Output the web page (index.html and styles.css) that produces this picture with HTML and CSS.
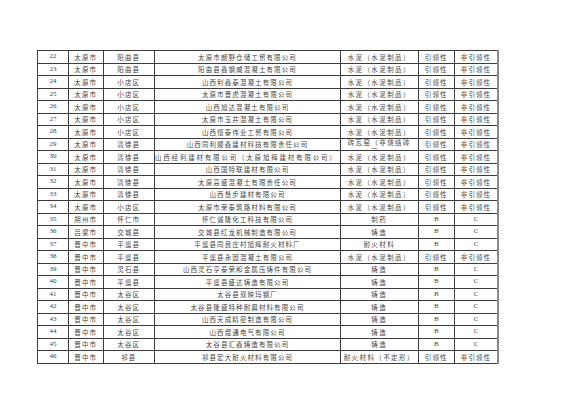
FILE: index.html
```html
<!DOCTYPE html>
<html lang="zh">
<head>
<meta charset="utf-8">
<title>名单</title>
<link rel="stylesheet" href="styles.css">
</head>
<body>
<table class="list">
<colgroup>
<col class="c-no"><col class="c-city"><col class="c-county"><col class="c-name"><col class="c-ind"><col class="c-a"><col class="c-b">
</colgroup>
<tbody>
<tr><td class="num">22</td><td>太原市</td><td>阳曲县</td><td>太原市朗野仓储工贸有限公司</td><td class="ind">水泥（水泥制品）</td><td>引领性</td><td class="last">非引领性</td></tr>
<tr><td class="num">23</td><td>太原市</td><td>阳曲县</td><td>阳曲县鑫钢威混凝土有限公司</td><td class="ind">水泥（水泥制品）</td><td>引领性</td><td class="last">非引领性</td></tr>
<tr><td class="num">24</td><td>太原市</td><td>小店区</td><td>山西利鑫泰混凝土有限公司</td><td class="ind">水泥（水泥制品）</td><td>引领性</td><td class="last">非引领性</td></tr>
<tr><td class="num">25</td><td>太原市</td><td>小店区</td><td>太原市晋虎混凝土有限公司</td><td class="ind">水泥（水泥制品）</td><td>引领性</td><td class="last">非引领性</td></tr>
<tr><td class="num">26</td><td>太原市</td><td>小店区</td><td>山西旭达混凝土有限公司</td><td class="ind">水泥（水泥制品）</td><td>引领性</td><td class="last">非引领性</td></tr>
<tr><td class="num">27</td><td>太原市</td><td>小店区</td><td>太原市玉井混凝土有限公司</td><td class="ind">水泥（水泥制品）</td><td>引领性</td><td class="last">非引领性</td></tr>
<tr><td class="num">28</td><td>太原市</td><td>小店区</td><td>山西恒泰伟业工贸有限公司</td><td class="ind">水泥（水泥制品）</td><td>引领性</td><td class="last">非引领性</td></tr>
<tr><td class="num">29</td><td>太原市</td><td>清徐县</td><td>山西同利顺鑫建材科技有限责任公司</td><td class="ind"><div class="clip">砖瓦窑（非烧结砖瓦）</div></td><td>引领性</td><td class="last">非引领性</td></tr>
<tr><td class="num">30</td><td>太原市</td><td>清徐县</td><td class="wide">山西经利建材有限公司（太原旭辉建材有限公司）</td><td class="ind">水泥（水泥制品）</td><td>引领性</td><td class="last">非引领性</td></tr>
<tr><td class="num">31</td><td>太原市</td><td>清徐县</td><td>山西国特联建材有限公司</td><td class="ind">水泥（水泥制品）</td><td>引领性</td><td class="last">非引领性</td></tr>
<tr><td class="num">32</td><td>太原市</td><td>清徐县</td><td>太原高盛混凝土有限责任公司</td><td class="ind">水泥（水泥制品）</td><td>引领性</td><td class="last">非引领性</td></tr>
<tr><td class="num">33</td><td>太原市</td><td>清徐县</td><td>山西慧步建材有限公司</td><td class="ind">水泥（水泥制品）</td><td>引领性</td><td class="last">非引领性</td></tr>
<tr><td class="num">34</td><td>太原市</td><td>小店区</td><td>太原市荣泰筑路材料有限公司</td><td class="ind">水泥（水泥制品）</td><td>引领性</td><td class="last">非引领性</td></tr>
<tr><td class="num">35</td><td>朔州市</td><td>怀仁市</td><td>怀仁诚隆化工科技有限公司</td><td class="ind">制药</td><td class="lat">B</td><td class="last lat">C</td></tr>
<tr><td class="num">36</td><td>吕梁市</td><td>交城县</td><td>交城县红龙机械制造有限公司</td><td class="ind">铸造</td><td class="lat">B</td><td class="last lat">C</td></tr>
<tr><td class="num">37</td><td>晋中市</td><td>平遥县</td><td>平遥县同良庄村旭辉耐火材料厂</td><td class="ind">耐火材料</td><td class="lat">B</td><td class="last lat">C</td></tr>
<tr><td class="num">38</td><td>晋中市</td><td>平遥县</td><td>平遥县永固混凝土有限公司</td><td class="ind">水泥（水泥制品）</td><td>引领性</td><td class="last">非引领性</td></tr>
<tr><td class="num">39</td><td>晋中市</td><td>灵石县</td><td>山西灵石亨泰荣和金属压铸件有限公司</td><td class="ind">铸造</td><td class="lat">B</td><td class="last lat">C</td></tr>
<tr><td class="num">40</td><td>晋中市</td><td>平遥县</td><td>平遥县盛达铸造有限公司</td><td class="ind">铸造</td><td class="lat">B</td><td class="last lat">C</td></tr>
<tr><td class="num">41</td><td>晋中市</td><td>太谷区</td><td>太谷县双映玛钢厂</td><td class="ind">铸造</td><td class="lat">B</td><td class="last lat">C</td></tr>
<tr><td class="num">42</td><td>晋中市</td><td>太谷区</td><td>太谷县隆盛特种耐磨材料有限公司</td><td class="ind">铸造</td><td class="lat">B</td><td class="last lat">C</td></tr>
<tr><td class="num">43</td><td>晋中市</td><td>太谷区</td><td>山西天成精密制造有限公司</td><td class="ind">铸造</td><td class="lat">B</td><td class="last lat">C</td></tr>
<tr><td class="num">44</td><td>晋中市</td><td>太谷区</td><td>山西煜通电气有限公司</td><td class="ind">铸造</td><td class="lat">B</td><td class="last lat">C</td></tr>
<tr><td class="num">45</td><td>晋中市</td><td>太谷区</td><td>太谷县汇鑫铸造有限公司</td><td class="ind">铸造</td><td class="lat">B</td><td class="last lat">C</td></tr>
<tr><td class="num">46</td><td>晋中市</td><td>祁县</td><td>祁县宏大耐火材料有限公司</td><td class="ind">耐火材料（不定形）</td><td>引领性</td><td class="last">非引领性</td></tr>
</tbody>
</table>
</body>
</html>
```
FILE: styles.css
```css
html, body {
  margin: 0;
  padding: 0;
  background: #ffffff;
}

body {
  padding: 50px 0 0 37px;
}

.list {
  border-collapse: collapse;
  table-layout: fixed;
  width: 461px;
  font-family: "Noto Sans CJK SC", "Noto Sans", sans-serif;
  font-size: 6.5px;
  font-weight: 400;
  color: #444444;
  border-top: 1px solid #222;
  border-left: 1px solid #333;
}

.c-no { width: 31px; }
.c-city { width: 34.5px; }
.c-county { width: 51.5px; }
.c-name { width: 186px; }
.c-ind { width: 77.5px; }
.c-a { width: 36.5px; }
.c-b { width: 43.5px; }

.list tr {
  height: 12.5px;
}

.list td {
  padding: 0;
  border: 1px solid #3c3c3c;
  text-align: center;
  vertical-align: middle;
  white-space: nowrap;
  overflow: hidden;
  line-height: 1;
  letter-spacing: 1.1px;
}

.list td.num,
.list td.lat {
  font-family: "Liberation Serif", serif;
  font-size: 7px;
  letter-spacing: 0;
}

.list td.ind {
  letter-spacing: 1.4px;
}

.list td.wide {
  letter-spacing: 1.8px;
  text-align: left;
}

.list td.last {
  border-left-color: #777;
  border-right: 2px solid #8a8a8a;
}

.clip {
  height: 11px;
  overflow: hidden;
  white-space: normal;
  line-height: 9px;
  padding: 0 3px;
  margin-top: -1px;
}
```
